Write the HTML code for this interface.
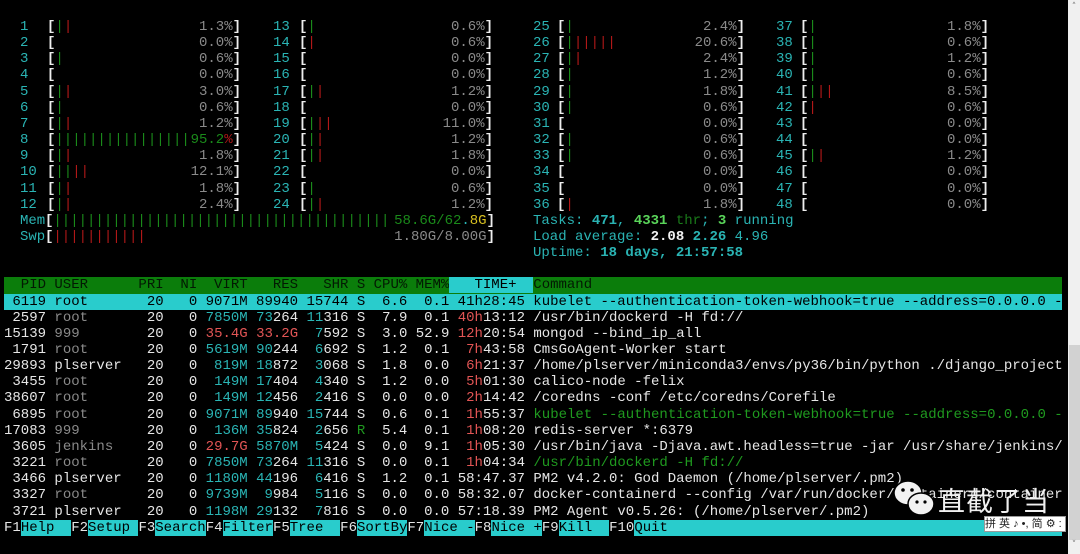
<!DOCTYPE html>
<html><head><meta charset="utf-8"><style>
body{margin:0;width:1080px;height:554px;background:#000;overflow:hidden;position:relative;font-family:"Liberation Mono","DejaVu Sans Mono",monospace;font-size:14px;}
.m{position:absolute;height:16px;line-height:16px;margin:0;white-space:pre;}
.c1{left:20px;width:221px}.c2{left:273px;width:220px}.c3{left:533px;width:212px}.c4{left:776px;width:213px}
n{position:absolute;left:0;color:#2ab4b4}
.c1 k{left:27px}.c2 k{left:26px}.c3 k{left:24px}.c4 k{left:24px}
k{position:absolute;color:#eee;font-weight:bold;letter-spacing:0}
g{color:#1a8a1a;font-weight:normal}r{color:#b01818;font-weight:normal}
v{position:absolute;right:0;color:#8a8a8a}
w{color:#eee;font-weight:bold}
.row{position:absolute;left:4px;width:1058px;height:16.15px;line-height:16px;white-space:pre;color:#e6e6e6;overflow:hidden}
.cy{color:#2ab4b4}.gr{color:#8a8a8a}.rd{color:#e25555}.gn{color:#1f9a1f}.bd{font-weight:bold}
.sel{background:#29cccc;color:#000}
.hdr{background:#0b7d0b;color:#031a03}
.fb{background:#29cccc;color:#000}
</style></head><body>

<div class="m c1" style="top:19px"><n>1</n><k>[<g>|</g><r>|</r></k><v>1.3%<w>]</w></v></div>
<div class="m c1" style="top:35.15px"><n>2</n><k>[</k><v>0.0%<w>]</w></v></div>
<div class="m c1" style="top:51.3px"><n>3</n><k>[<g>|</g></k><v>0.6%<w>]</w></v></div>
<div class="m c1" style="top:67.45px"><n>4</n><k>[</k><v>0.0%<w>]</w></v></div>
<div class="m c1" style="top:83.6px"><n>5</n><k>[<g>|</g><r>|</r></k><v>3.0%<w>]</w></v></div>
<div class="m c1" style="top:99.75px"><n>6</n><k>[<g>|</g></k><v>0.6%<w>]</w></v></div>
<div class="m c1" style="top:115.9px"><n>7</n><k>[<g>|</g><r>|</r></k><v>1.2%<w>]</w></v></div>
<div class="m c1" style="top:132.05px"><n>8</n><k>[<g>||||||||||||||||</g></k><v><g>95.2</g><r>%</r><w>]</w></v></div>
<div class="m c1" style="top:148.2px"><n>9</n><k>[<g>|</g><r>|</r></k><v>1.8%<w>]</w></v></div>
<div class="m c1" style="top:164.35px"><n>10</n><k>[<g>||</g><r>||</r></k><v>12.1%<w>]</w></v></div>
<div class="m c1" style="top:180.5px"><n>11</n><k>[<g>|</g><r>|</r></k><v>1.8%<w>]</w></v></div>
<div class="m c1" style="top:196.65px"><n>12</n><k>[<g>|</g><r>|</r></k><v>2.4%<w>]</w></v></div>

<div class="m c2" style="top:19px"><n>13</n><k>[<g>|</g></k><v>0.6%<w>]</w></v></div>
<div class="m c2" style="top:35.15px"><n>14</n><k>[<r>|</r></k><v>0.6%<w>]</w></v></div>
<div class="m c2" style="top:51.3px"><n>15</n><k>[</k><v>0.0%<w>]</w></v></div>
<div class="m c2" style="top:67.45px"><n>16</n><k>[</k><v>0.0%<w>]</w></v></div>
<div class="m c2" style="top:83.6px"><n>17</n><k>[<g>|</g><r>|</r></k><v>1.2%<w>]</w></v></div>
<div class="m c2" style="top:99.75px"><n>18</n><k>[</k><v>0.0%<w>]</w></v></div>
<div class="m c2" style="top:115.9px"><n>19</n><k>[<g>|</g><r>||</r></k><v>11.0%<w>]</w></v></div>
<div class="m c2" style="top:132.05px"><n>20</n><k>[<g>|</g><r>|</r></k><v>1.2%<w>]</w></v></div>
<div class="m c2" style="top:148.2px"><n>21</n><k>[<g>|</g><r>|</r></k><v>1.8%<w>]</w></v></div>
<div class="m c2" style="top:164.35px"><n>22</n><k>[</k><v>0.0%<w>]</w></v></div>
<div class="m c2" style="top:180.5px"><n>23</n><k>[<g>|</g></k><v>0.6%<w>]</w></v></div>
<div class="m c2" style="top:196.65px"><n>24</n><k>[<g>|</g><r>|</r></k><v>1.2%<w>]</w></v></div>

<div class="m c3" style="top:19px"><n>25</n><k>[<g>|</g></k><v>2.4%<w>]</w></v></div>
<div class="m c3" style="top:35.15px"><n>26</n><k>[<g>|</g><r>|||||</r></k><v>20.6%<w>]</w></v></div>
<div class="m c3" style="top:51.3px"><n>27</n><k>[<g>|</g><r>|</r></k><v>2.4%<w>]</w></v></div>
<div class="m c3" style="top:67.45px"><n>28</n><k>[<g>|</g></k><v>1.2%<w>]</w></v></div>
<div class="m c3" style="top:83.6px"><n>29</n><k>[<g>|</g></k><v>1.8%<w>]</w></v></div>
<div class="m c3" style="top:99.75px"><n>30</n><k>[<g>|</g></k><v>0.6%<w>]</w></v></div>
<div class="m c3" style="top:115.9px"><n>31</n><k>[</k><v>0.0%<w>]</w></v></div>
<div class="m c3" style="top:132.05px"><n>32</n><k>[<g>|</g></k><v>0.6%<w>]</w></v></div>
<div class="m c3" style="top:148.2px"><n>33</n><k>[<g>|</g></k><v>0.6%<w>]</w></v></div>
<div class="m c3" style="top:164.35px"><n>34</n><k>[</k><v>0.0%<w>]</w></v></div>
<div class="m c3" style="top:180.5px"><n>35</n><k>[</k><v>0.0%<w>]</w></v></div>
<div class="m c3" style="top:196.65px"><n>36</n><k>[<r>|</r></k><v>1.8%<w>]</w></v></div>

<div class="m c4" style="top:19px"><n>37</n><k>[<g>|</g></k><v>1.8%<w>]</w></v></div>
<div class="m c4" style="top:35.15px"><n>38</n><k>[<g>|</g></k><v>0.6%<w>]</w></v></div>
<div class="m c4" style="top:51.3px"><n>39</n><k>[<g>|</g></k><v>1.2%<w>]</w></v></div>
<div class="m c4" style="top:67.45px"><n>40</n><k>[<g>|</g></k><v>0.6%<w>]</w></v></div>
<div class="m c4" style="top:83.6px"><n>41</n><k>[<g>|</g><r>||</r></k><v>8.5%<w>]</w></v></div>
<div class="m c4" style="top:99.75px"><n>42</n><k>[<r>|</r></k><v>0.6%<w>]</w></v></div>
<div class="m c4" style="top:115.9px"><n>43</n><k>[</k><v>0.0%<w>]</w></v></div>
<div class="m c4" style="top:132.05px"><n>44</n><k>[</k><v>0.0%<w>]</w></v></div>
<div class="m c4" style="top:148.2px"><n>45</n><k>[<g>|</g><r>|</r></k><v>1.2%<w>]</w></v></div>
<div class="m c4" style="top:164.35px"><n>46</n><k>[</k><v>0.0%<w>]</w></v></div>
<div class="m c4" style="top:180.5px"><n>47</n><k>[</k><v>0.0%<w>]</w></v></div>
<div class="m c4" style="top:196.65px"><n>48</n><k>[</k><v>0.0%<w>]</w></v></div>

<div class="m" style="top:212.8px;left:20px;width:475px"><n>Mem</n><k style="left:25px">[<g>||||||||||||||||||||||||||||||||||||||||</g></k><v><g>58.6G/62</g><span class="cy">.</span><span style="color:#d8c020">8G</span><w>]</w></v></div>
<div class="m" style="top:228.95px;left:20px;width:475px"><n>Swp</n><k style="left:25px">[<r>|||||||||||</r></k><v>1.80G/8.00G<w>]</w></v></div>

<div class="row" style="top:212.8px;left:533px;width:500px"><span class="cy">Tasks: </span><span class="cy bd">471</span><span class="cy">, </span><span class="bd" style="color:#5ad55a">4331</span><span style="color:#1a7a1a"> thr</span><span class="cy">; </span><span class="bd" style="color:#5ad55a">3</span><span class="cy"> running</span></div>
<div class="row" style="top:228.95px;left:533px;width:500px"><span class="cy">Load average: </span><span class="bd" style="color:#f0f0f0">2.08 </span><span class="cy bd">2.26 </span><span class="cy">4.96</span></div>
<div class="row" style="top:245.1px;left:533px;width:500px"><span class="cy">Uptime: </span><span class="cy bd">18 days, 21:57:58</span></div>

<div class="row hdr" style="top:277.4px">  PID USER      PRI  NI  VIRT   RES   SHR S CPU% MEM%<span class="sel">   TIME+  </span>Command</div>
<div class="row sel" style="top:293.55px"> 6119 root       20   0 9071M 89940 15744 S  6.6  0.1 41h28:45 kubelet --authentication-token-webhook=true --address=0.0.0.0 -</div>
<div class="row" style="top:309.7px"> 2597 <span class="gr">root     </span>  20   0 <span class="cy">7850M</span> <span class="cy">73</span>264 <span class="cy">11</span>316 S  7.9  0.1 <span class="rd">40h</span>13:12 /usr/bin/dockerd -H fd://</div>
<div class="row" style="top:325.85px">15139 <span class="gr">999      </span>  20   0 <span class="rd">35.4G</span> <span class="rd">33.2G</span>  <span class="cy">7</span>592 S  3.0 52.9 <span class="rd">12h</span>20:54 mongod --bind_ip_all</div>
<div class="row" style="top:342px"> 1791 <span class="gr">root     </span>  20   0 <span class="cy">5619M</span> <span class="cy">90</span>244  <span class="cy">6</span>692 S  1.2  0.1  <span class="rd">7h</span>43:58 CmsGoAgent-Worker start</div>
<div class="row" style="top:358.15px">29893 plserver   20   0  <span class="cy">819M</span> <span class="cy">18</span>872  <span class="cy">3</span>068 S  1.8  0.0  <span class="rd">6h</span>21:37 /home/plserver/miniconda3/envs/py36/bin/python ./django_project</div>
<div class="row" style="top:374.3px"> 3455 <span class="gr">root     </span>  20   0  <span class="cy">149M</span> <span class="cy">17</span>404  <span class="cy">4</span>340 S  1.2  0.0  <span class="rd">5h</span>01:30 calico-node -felix</div>
<div class="row" style="top:390.45px">38607 <span class="gr">root     </span>  20   0  <span class="cy">149M</span> <span class="cy">12</span>456  <span class="cy">2</span>416 S  0.0  0.0  <span class="rd">2h</span>14:42 /coredns -conf /etc/coredns/Corefile</div>
<div class="row" style="top:406.6px"> 6895 <span class="gr">root     </span>  20   0 <span class="cy">9071M</span> <span class="cy">89</span>940 <span class="cy">15</span>744 S  0.6  0.1  <span class="rd">1h</span>55:37 <span class="gn">kubelet --authentication-token-webhook=true --address=0.0.0.0 -</span></div>
<div class="row" style="top:422.75px">17083 <span class="gr">999      </span>  20   0  <span class="cy">136M</span> <span class="cy">35</span>824  <span class="cy">2</span>656 <span class="gn">R</span>  5.4  0.1  <span class="rd">1h</span>08:20 redis-server *:6379</div>
<div class="row" style="top:438.9px"> 3605 <span class="gr">jenkins  </span>  20   0 <span class="rd">29.7G</span> <span class="cy">5870M</span>  <span class="cy">5</span>424 S  0.0  9.1  <span class="rd">1h</span>05:30 /usr/bin/java -Djava.awt.headless=true -jar /usr/share/jenkins/</div>
<div class="row" style="top:455.05px"> 3221 <span class="gr">root     </span>  20   0 <span class="cy">7850M</span> <span class="cy">73</span>264 <span class="cy">11</span>316 S  0.0  0.1  <span class="rd">1h</span>04:34 <span class="gn">/usr/bin/dockerd -H fd://</span></div>
<div class="row" style="top:471.2px"> 3466 plserver   20   0 <span class="cy">1180M</span> <span class="cy">44</span>196  <span class="cy">6</span>416 S  1.2  0.1 58:47.37 PM2 v4.2.0: God Daemon (/home/plserver/.pm2)</div>
<div class="row" style="top:487.35px"> 3327 <span class="gr">root     </span>  20   0 <span class="cy">9739M</span>  <span class="cy">9</span>984  <span class="cy">5</span>116 S  0.0  0.0 58:32.07 docker-containerd --config /var/run/docker/containerd/container</div>
<div class="row" style="top:503.5px"> 3721 plserver   20   0 <span class="cy">1198M</span> <span class="cy">29</span>132  <span class="cy">7</span>816 S  0.0  0.0 57:18.39 PM2 Agent v0.5.26: (/home/plserver/.pm2)</div>
<div class="row" style="top:519.65px;background:#29cccc;color:#000"><span style="background:#000;color:#e6e6e6">F1</span>Help  <span style="background:#000;color:#e6e6e6">F2</span>Setup <span style="background:#000;color:#e6e6e6">F3</span>Search<span style="background:#000;color:#e6e6e6">F4</span>Filter<span style="background:#000;color:#e6e6e6">F5</span>Tree  <span style="background:#000;color:#e6e6e6">F6</span>SortBy<span style="background:#000;color:#e6e6e6">F7</span>Nice -<span style="background:#000;color:#e6e6e6">F8</span>Nice +<span style="background:#000;color:#e6e6e6">F9</span>Kill  <span style="background:#000;color:#e6e6e6">F10</span>Quit</div>

<!-- watermark -->
<svg style="position:absolute;left:890px;top:478px" width="52" height="44" viewBox="0 0 52 44">
<ellipse cx="18" cy="15" rx="14" ry="12" fill="#f2f2f2" stroke="#000" stroke-width="1.5"/>
<ellipse cx="31" cy="26" rx="13" ry="11" fill="#f2f2f2" stroke="#000" stroke-width="1.5"/>
<circle cx="13" cy="12" r="1.8" fill="#000"/><circle cx="22" cy="12" r="1.8" fill="#000"/>
<circle cx="27" cy="24" r="1.6" fill="#000"/><circle cx="35" cy="24" r="1.6" fill="#000"/>
</svg>
<div style="position:absolute;left:938px;top:484px;font-family:'Noto Sans CJK SC',sans-serif;font-size:27px;line-height:32px;color:#f0f0f0;letter-spacing:1px">直截了当</div>
<div style="position:absolute;left:984px;top:516px;width:80px;height:14px;background:#fff;border:1px solid #999;font-family:'Liberation Sans','Noto Sans CJK SC',sans-serif;font-size:11px;line-height:14px;color:#222;white-space:nowrap;overflow:hidden">拼 英 ♪ •, 简 ⚙ :</div>

<!-- scrollbar -->
<div style="position:absolute;left:1068px;top:0;width:12px;height:554px;background:#f0f0f0"></div>
<div style="position:absolute;left:1069px;top:345px;width:11px;height:195px;background:#d2d2d2"></div>
<div style="position:absolute;left:1068px;top:2px;width:12px;font:9px 'DejaVu Sans',sans-serif;color:#777;text-align:center">˄</div>
<div style="position:absolute;left:1068px;top:540px;width:12px;font:9px 'DejaVu Sans',sans-serif;color:#777;text-align:center">˅</div>
</body></html>
